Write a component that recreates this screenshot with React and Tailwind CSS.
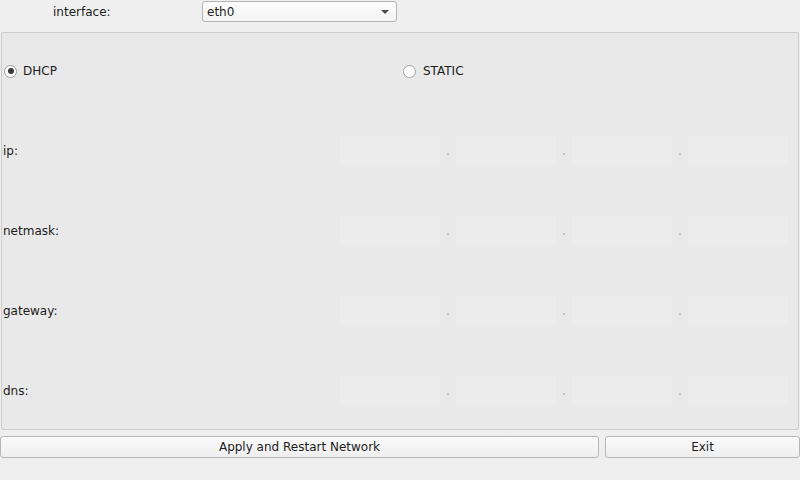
export default function App() {
  const rows = ["ip:", "netmask:", "gateway:", "dns:"];
  const Field = () => (
    <div className="w-[100px] h-[30px] bg-[#ececec] rounded-[2px]" />
  );
  const Dot = () => (
    <div className="w-[16px] h-[30px] flex items-end justify-center pb-[11px]">
      <div className="w-[2px] h-[2px] bg-[#c2c2c2]" />
    </div>
  );
  return (
    <div
      className="w-[800px] h-[480px] bg-[#efefef] text-[12px] text-[#1c1c1c] flex flex-col overflow-hidden"
      style={{ fontFamily: '"DejaVu Sans", sans-serif' }}
    >
      <div className="h-[32px] flex items-start pt-[1px]">
        <div className="w-[202px] h-[21px] flex items-center pl-[53px]">interface:</div>
        <div className="w-[195px] h-[21px] border border-[#b4b4b4] rounded-[3px] bg-gradient-to-b from-[#fcfcfc] to-[#f4f4f4] flex items-center pl-[4px] pr-[7px] justify-between">
          <span>eth0</span>
          <svg width="8" height="4" viewBox="0 0 8 4">
            <path d="M0 0 L8 0 L4 4 Z" fill="#4a4a4a" />
          </svg>
        </div>
      </div>
      <div className="mx-[1px] h-[398px] border border-[#cdcdcd] rounded-[2px] bg-[#e9e9e9] flex flex-col justify-between pt-[23px] pb-[23px] pr-[10px]">
        <div className="h-[30px] flex items-center">
          <div className="w-[401px] flex items-center pl-[2px]">
            <div className="w-[13px] h-[13px] rounded-full border border-[#9c9c9c] bg-white flex items-center justify-center">
              <div className="w-[6px] h-[6px] rounded-full bg-[#3a3a3a]" />
            </div>
            <span className="ml-[6px]">DHCP</span>
          </div>
          <div className="flex items-center">
            <div className="w-[13px] h-[13px] rounded-full border border-[#a4a4a4] bg-white" />
            <span className="ml-[7px]">STATIC</span>
          </div>
        </div>
        {rows.map((r) => (
          <div key={r} className="h-[30px] flex items-center">
            <div className="flex-1 pl-[1px]">{r}</div>
            <Field />
            <Dot />
            <Field />
            <Dot />
            <Field />
            <Dot />
            <Field />
          </div>
        ))}
      </div>
      <div className="flex gap-[6px] mt-[6px] h-[22px]">
        <button className="w-[599px] h-[22px] border border-[#b6b6b6] rounded-[3px] bg-gradient-to-b from-[#fbfbfb] to-[#eeeeee] flex items-center justify-center">
          Apply and Restart Network
        </button>
        <button className="w-[195px] h-[22px] border border-[#b6b6b6] rounded-[3px] bg-gradient-to-b from-[#fbfbfb] to-[#eeeeee] flex items-center justify-center">
          Exit
        </button>
      </div>
    </div>
  );
}
